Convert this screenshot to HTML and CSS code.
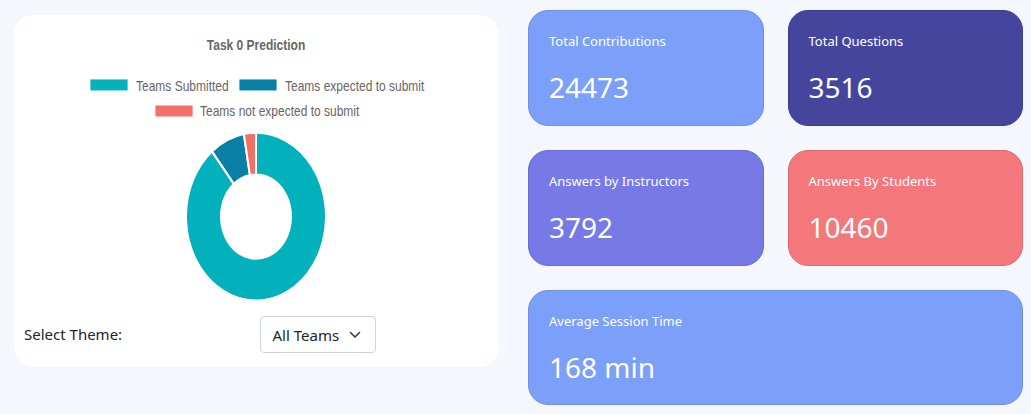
FILE: index.html
```html
<!DOCTYPE html>
<html lang="en">
<head>
<meta charset="utf-8">
<title>Dashboard</title>
<link rel="stylesheet" href="styles.css">
</head>
<body>
<main class="page">
  <section class="chart-card">
    <svg class="chart" width="485" height="290" viewBox="0 0 485 290">
      <g transform="scale(1 1.2)">
        <text class="chart-title" x="242" y="29.2" text-anchor="middle">Task 0 Prediction</text>
        <rect class="legend-box" x="76" y="53.3" width="38" height="10" fill="#02b1bb"/>
        <text class="legend-text" x="122" y="63.1">Teams Submitted</text>
        <rect class="legend-box" x="225" y="53.3" width="38" height="10" fill="#0a7fa6"/>
        <text class="legend-text" x="271" y="63.1">Teams expected to submit</text>
        <rect class="legend-box" x="141" y="75" width="38" height="10" fill="#f17068"/>
        <text class="legend-text" x="186" y="84.3">Teams not expected to submit</text>
        <path class="slice" fill="#02b1bb" d="M 242 98 A 70 70 0 1 1 197.95 113.60 L 219.97 140.80 A 35 35 0 1 0 242 133 Z"/>
        <path class="slice" fill="#0a7fa6" d="M 197.95 113.60 A 70 70 0 0 1 229.84 99.06 L 235.92 133.53 A 35 35 0 0 0 219.97 140.80 Z"/>
        <path class="slice" fill="#f17068" d="M 229.84 99.06 A 70 70 0 0 1 242 98 L 242 133 A 35 35 0 0 0 235.92 133.53 Z"/>
      </g>
    </svg>
    <div class="theme-row">
      <label class="theme-label">Select Theme:</label>
      <div class="select">
        <span class="select-value">All Teams</span>
        <svg class="chevron" width="12" height="8" viewBox="0 0 12 8"><path d="M1.5 1.5 L6 6 L10.5 1.5" fill="none" stroke="#343a40" stroke-width="1.6" stroke-linecap="round" stroke-linejoin="round"/></svg>
      </div>
    </div>
  </section>
  <section class="stats">
    <div class="stat stat-blue">
      <div class="stat-label">Total Contributions</div>
      <div class="stat-value">24473</div>
    </div>
    <div class="stat stat-navy">
      <div class="stat-label">Total Questions</div>
      <div class="stat-value">3516</div>
    </div>
    <div class="stat stat-violet">
      <div class="stat-label">Answers by Instructors</div>
      <div class="stat-value">3792</div>
    </div>
    <div class="stat stat-coral">
      <div class="stat-label">Answers By Students</div>
      <div class="stat-value">10460</div>
    </div>
    <div class="stat stat-blue stat-wide">
      <div class="stat-label">Average Session Time</div>
      <div class="stat-value">168 min</div>
    </div>
  </section>
</main>
</body>
</html>
```

FILE: styles.css
```css
html, body {
  margin: 0;
  padding: 0;
}
body {
  background: #f4f7fe;
  font-family: "Noto Sans", "Open Sans", sans-serif;
  color: #212529;
  width: 1031px;
  height: 414px;
  overflow: hidden;
}
.page {
  display: flex;
  align-items: flex-start;
  gap: 29px;
  padding: 10px 8px 0 14px;
}
.chart-card {
  width: 485px;
  margin-top: 5px;
  background: #ffffff;
  border-radius: 20px;
  padding: 0 0 14px 0;
  display: flex;
  flex-direction: column;
}
.chart {
  display: block;
}
.chart-title {
  font-family: "Liberation Sans", Arial, sans-serif;
  font-weight: bold;
  font-size: 12px;
  fill: #666666;
}
.legend-text {
  font-family: "Liberation Sans", Arial, sans-serif;
  font-size: 12px;
  fill: #666666;
}
.legend-box {
  stroke: #ffffff;
  stroke-width: 0.8;
}
.slice {
  stroke: #ffffff;
  stroke-width: 2;
  stroke-linejoin: miter;
}
.theme-row {
  margin-top: 11px;
  display: grid;
  grid-template-columns: 1fr 1fr;
  align-items: center;
  padding: 0 10px;
}
.theme-label {
  font-size: 15px;
  line-height: 20px;
  color: #212529;
  margin-top: -2px;
}
.select {
  margin-left: 3px;
  width: 116px;
  height: 37px;
  box-sizing: border-box;
  border: 1px solid #ced4da;
  border-radius: 4px;
  display: flex;
  align-items: center;
  justify-content: space-between;
  padding: 0 14px 0 12px;
  background: #ffffff;
}
.select-value {
  font-size: 15px;
  line-height: 20px;
  color: #212529;
}
.chevron {
  display: block;
  margin-top: 1px;
}
.stats {
  flex: 1;
  display: grid;
  grid-template-columns: 1fr 1fr;
  gap: 24px;
}
.stat {
  box-sizing: border-box;
  height: 116px;
  border-radius: 20px;
  padding: 21px 20px;
  color: #ffffff;
  border: 1px solid transparent;
}
.stat-wide {
  grid-column: 1 / 3;
  height: 115px;
}
.stat-label {
  font-size: 13px;
  line-height: 18px;
}
.stat-value {
  margin-top: 18px;
  font-size: 28px;
  line-height: 38px;
}
.stat-blue {
  background: #7c9ff9;
  border-color: #6f8fe4;
}
.stat-navy {
  background: #46459e;
  border-color: #3e3d90;
}
.stat-violet {
  background: #7679e6;
  border-color: #6a6dd4;
}
.stat-coral {
  background: #f4777c;
  border-color: #e06a70;
}
```
